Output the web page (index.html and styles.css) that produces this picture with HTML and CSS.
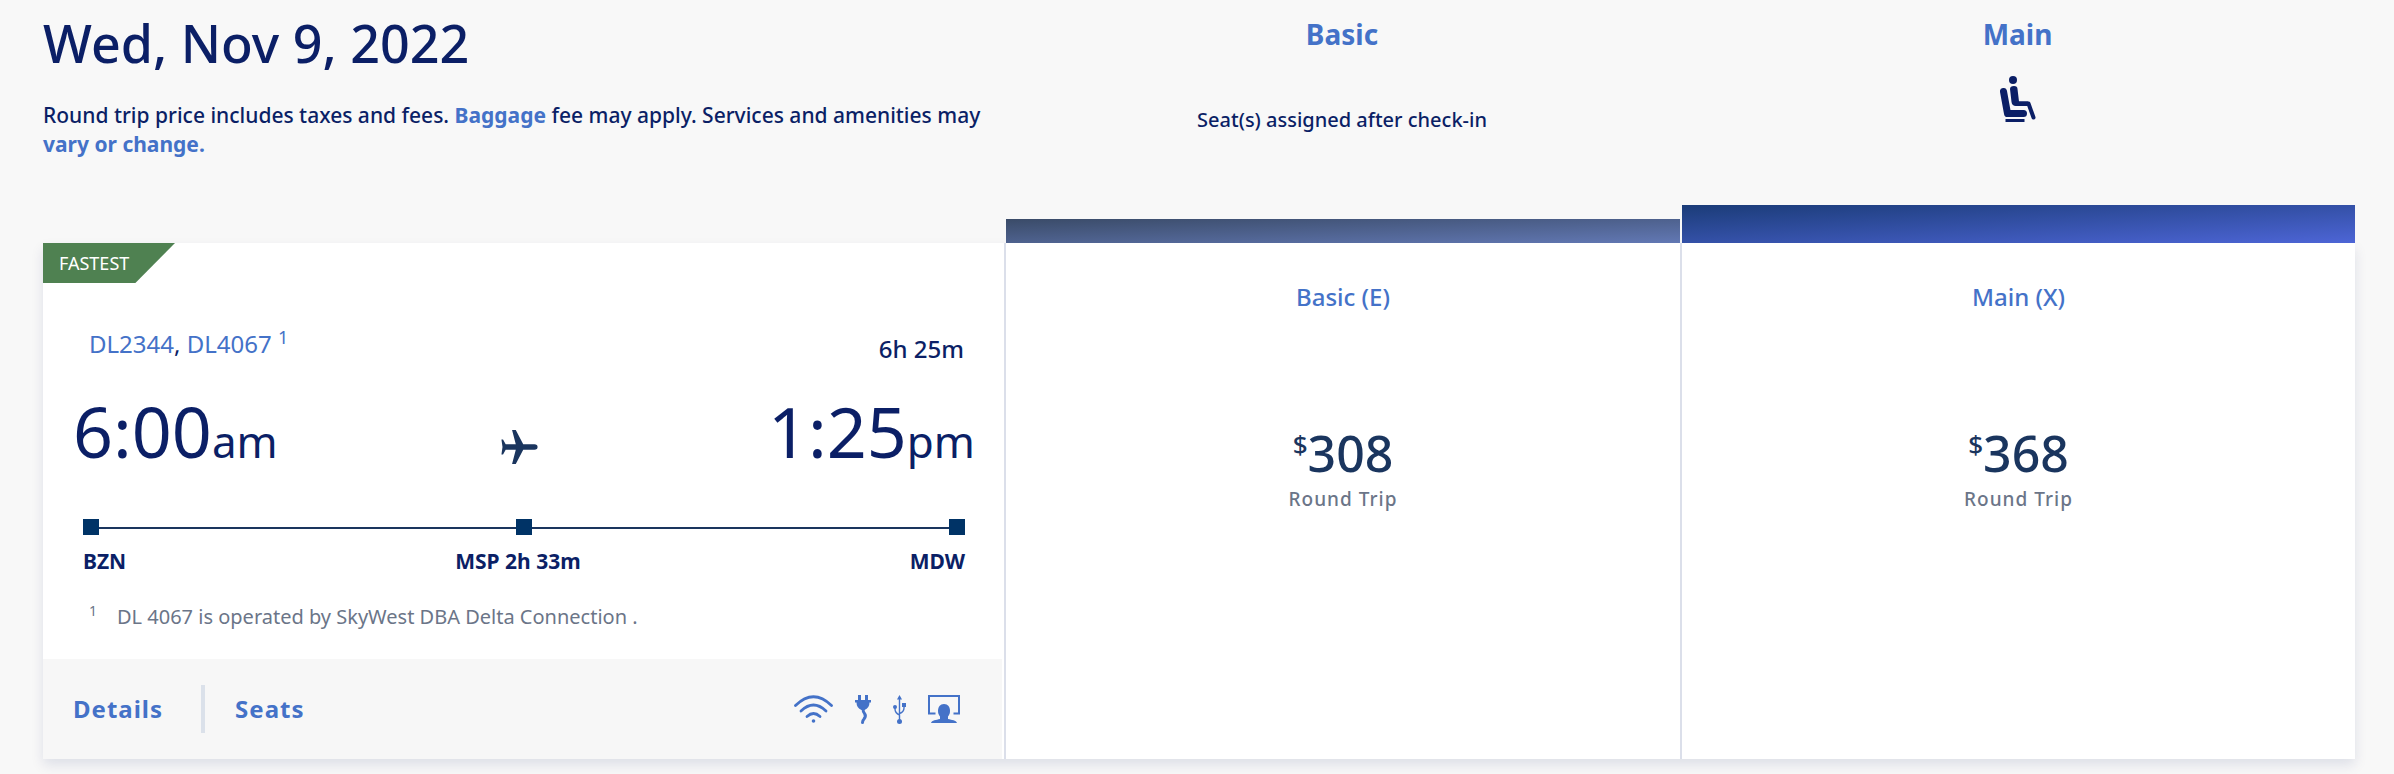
FILE: index.html
```html
<!DOCTYPE html>
<html lang="en">
<head>
  <meta charset="UTF-8">
  <meta name="viewport" content="width=device-width, initial-scale=1.0">
  <title>Flight results</title>
  <link rel="stylesheet" href="styles.css">
</head>
<body>
  <main class="results">
    <header class="results-header">
      <div class="trip-info">
        <h1 class="trip-date">Wed, Nov 9, 2022</h1>
        <p class="trip-note">Round trip price includes taxes and fees. <a href="#baggage">Baggage</a> fee may apply. Services and amenities may <a href="#amenities">vary or change.</a></p>
      </div>
      <div class="cabin">
        <h2 class="cabin-name">Basic</h2>
        <p class="cabin-text">Seat(s) assigned after check-in</p>
      </div>
      <div class="cabin">
        <h2 class="cabin-name">Main</h2>
        <svg class="seat-icon" viewBox="0 0 36 46" role="img" aria-label="Seat selection">
          <circle cx="13" cy="4" r="4"/>
          <path d="M3.500 15.500 L7.500 37.500 H23.500" class="seat-line"/>
          <path d="M14 13.500 L16 27.500 H28.500 L33.500 41.500" class="leg-line"/>
          <path d="M10 13 Q10 10 14 10 Q17.500 10 17.500 13 L19 25.500 H28 L30 30 H16 Q12 30 11.500 26 Z"/>
          <rect x="5.500" y="43" width="19" height="3"/>
        </svg>
      </div>
    </header>

    <div class="cabin-bars">
      <div class="bar-gap"></div>
      <div class="bar bar-basic"></div>
      <div class="bar bar-main"></div>
    </div>

    <section class="flight-card">
      <div class="flight">
        <div class="flight-body">
          <span class="badge">FASTEST</span>
          <div class="flight-row">
            <div class="flight-numbers"><a href="#dl2344">DL2344</a>, <a href="#dl4067">DL4067 <sup>1</sup></a></div>
            <div class="duration">6h 25m</div>
          </div>
          <div class="time-row">
            <div class="time">6:00<small>am</small></div>
            <svg class="plane-icon" viewBox="0 0 34 32" aria-hidden="true">
              <path d="M0 9 H1.500 L4 13.500 H13.500 L10 0 H13.500 L20.500 13.500 H31 Q34 13.500 34 16 Q34 18.500 31 18.500 H20.500 L13.500 32 H10 L13.500 18.500 H4 L1.500 23 H0 L1 16 Z"/>
            </svg>
            <div class="time">1:25<small>pm</small></div>
          </div>
          <div class="route-line"><i></i><i></i><i></i></div>
          <div class="route-labels">
            <span>BZN</span>
            <span>MSP 2h 33m</span>
            <span>MDW</span>
          </div>
          <p class="operated"><sup>1</sup><span>DL 4067 is operated by SkyWest DBA Delta Connection .</span></p>
        </div>
        <footer class="flight-footer">
          <a class="footer-link" href="#details">Details</a>
          <a class="footer-link" href="#seats">Seats</a>
          <div class="amenities">
            <svg width="39" height="28" viewBox="0 0 39 28" role="img" aria-label="Wi-Fi">
              <g class="stroke">
                <path d="M1.500 10.500 Q19.500 -7 37.500 10.500" stroke-width="2.800"/>
                <path d="M7 16 Q19.500 4 32 16" stroke-width="2.800"/>
                <path d="M13 21.500 Q19.500 15.500 26 21.500" stroke-width="2.800"/>
              </g>
              <circle cx="19.500" cy="26" r="1.800"/>
            </svg>
            <svg width="16" height="29" viewBox="0 0 16 29" role="img" aria-label="Power outlet">
              <path d="M3 0 H6 V5 H10 V0 H13 V5 H16 V7.500 H14.500 Q14.500 13 9.500 15 H6.500 Q1.500 13 1.500 7.500 H0 V5 H3 Z"/>
              <path class="stroke" d="M8 13.500 Q8 17 9.500 18.500 Q11.500 21 9 24 Q7.500 25.500 7.500 27.500" stroke-width="3"/>
            </svg>
            <svg width="13" height="29" viewBox="0 0 13 29" role="img" aria-label="USB power">
              <path d="M6.500 0 L9 4.500 H4 Z"/>
              <circle cx="6.500" cy="26.500" r="2.500"/>
              <circle cx="2" cy="12" r="2"/>
              <rect x="9" y="8" width="4" height="4"/>
              <path class="stroke" d="M6.500 3 V25 M2 12 V14 Q2 18 6.500 20 M11 11 V13 Q11 17 6.500 18.500" stroke-width="1.400"/>
            </svg>
            <svg width="32" height="28" viewBox="0 0 32 28" role="img" aria-label="Seatback entertainment">
              <path class="stroke screen" d="M7.500 18.500 H1 V1 H31 V18.500 H25.500" stroke-width="2"/>
              <path d="M16 9 C20 9 22 12 22 16 C22 19 21 20 20 21.500 V24 C24 25 28 25 29 28 H3 C4 25 8 25 12 24 V21.500 C11 20 10 19 10 16 C10 12 12 9 16 9 Z"/>
            </svg>
          </div>
        </footer>
      </div>
      <a class="fare" href="#basic">
        <span class="fare-name">Basic (E)</span>
        <span class="fare-price"><sup>$</sup>308</span>
        <span class="fare-type">Round Trip</span>
      </a>
      <a class="fare" href="#main">
        <span class="fare-name">Main (X)</span>
        <span class="fare-price"><sup>$</sup>368</span>
        <span class="fare-type">Round Trip</span>
      </a>
    </section>
  </main>
</body>
</html>
```
FILE: styles.css
```css
* {
  box-sizing: border-box;
}

body {
  margin: 0;
  background-color: #f8f8f8;
  color: #0b1f66;
  font-family: "Noto Sans", "Open Sans", sans-serif;
}

a {
  color: #4472c8;
  text-decoration: none;
}

h1, h2, p {
  margin: 0;
}

.results {
  padding: 0 39px 15px 43px;
}

.results-header,
.cabin-bars,
.flight-card {
  display: grid;
  grid-template-columns: 961fr 676fr 675fr;
}

.results-header {
  height: 205px;
}

.trip-date {
  margin-top: 7px;
  font-size: 52px;
  line-height: 72px;
  font-weight: 500;
}

.trip-note {
  margin-top: 22px;
  font-size: 21px;
  line-height: 29px;
  font-weight: 500;
}

.trip-note a {
  font-weight: 700;
}

.cabin {
  display: flex;
  flex-direction: column;
  align-items: center;
  padding-top: 16px;
}

.cabin-name {
  color: #4472c8;
  font-size: 28px;
  line-height: 36px;
  font-weight: 700;
}

.cabin-text {
  margin-top: 54px;
  font-size: 20px;
  line-height: 28px;
  font-weight: 500;
}

.seat-icon {
  width: 36px;
  height: 46px;
  margin-top: 24px;
  fill: #0b1f66;
}

.seat-line,
.leg-line {
  fill: none;
  stroke: #0b1f66;
  stroke-linecap: round;
  stroke-linejoin: round;
}

.seat-line {
  stroke-width: 7;
}

.leg-line {
  stroke-width: 4;
}

.cabin-bars {
  align-items: end;
}

.bar {
  margin-left: 2px;
}

.bar-basic {
  height: 24px;
  background: linear-gradient(to bottom right, #3a4b68, #6278b4);
}

.bar-main {
  height: 38px;
  background: linear-gradient(to bottom right, #1b3c78, #4d65d6);
}

.flight-card {
  background-color: #fff;
  box-shadow: 0 6px 12px rgba(11, 31, 102, 0.11);
}

.flight {
  display: flex;
  flex-direction: column;
  padding-right: 2px;
}

.flight-body {
  padding: 0 27px 28px 30px;
}

.badge {
  display: block;
  width: 132px;
  margin-left: -30px;
  padding-left: 16px;
  background-color: #4f8151;
  clip-path: polygon(0 0, 100% 0, 70% 100%, 0 100%);
  color: #fff;
  font-size: 18px;
  line-height: 40px;
}

.flight-row {
  display: flex;
  justify-content: space-between;
  align-items: flex-end;
  height: 82px;
  padding: 0 11px 0 16px;
  font-size: 24px;
  line-height: 32px;
}

.flight-numbers {
  padding-bottom: 5px;
}

.flight-numbers sup {
  font-size: 18px;
  line-height: 0;
}

.duration {
  font-weight: 500;
}

.time-row {
  display: grid;
  grid-template-columns: 1fr auto 1fr;
  align-items: center;
  height: 96px;
  margin-top: 18px;
}

.time {
  font-size: 70px;
  line-height: 96px;
}

.time:last-child {
  text-align: right;
}

.time small {
  font-size: 44px;
}

.plane-icon {
  width: 37px;
  height: 34px;
  margin: 22px 10px 0 0;
  fill: #1a355e;
}

.route-line {
  display: flex;
  justify-content: space-between;
  margin: 40px 10px 0;
  background: linear-gradient(#1a355e, #1a355e) 0 8px / 100% 2px no-repeat;
}

.route-line i {
  width: 16px;
  height: 16px;
  background-color: #036;
}

.route-labels {
  display: flex;
  justify-content: space-between;
  margin: 11px 10px 0;
  font-size: 21px;
  line-height: 30px;
  font-weight: 700;
}

.operated {
  display: flex;
  gap: 20px;
  margin: 27px 16px 0;
  color: #6b7588;
  font-size: 20px;
  line-height: 28px;
}

.operated sup {
  font-size: 14px;
  line-height: 16px;
}

.flight-footer {
  display: flex;
  align-items: center;
  height: 100px;
  margin-top: auto;
  padding: 0 42px 0 30px;
  background-color: #f7f7f7;
}

.footer-link {
  font-size: 24px;
  line-height: 48px;
  font-weight: 700;
  letter-spacing: 1px;
}

.footer-link + .footer-link {
  margin-left: 38px;
  padding-left: 30px;
  border-left: 4px solid #dbe1ea;
}

.amenities {
  display: flex;
  align-items: center;
  gap: 22px;
  margin-left: auto;
  fill: #4472c8;
}

.amenities .stroke {
  fill: none;
  stroke: #4472c8;
  stroke-linecap: round;
}

.amenities .screen {
  stroke-linecap: butt;
}

.fare {
  display: flex;
  flex-direction: column;
  align-items: center;
  padding-top: 38px;
  border-left: 2px solid #dbdfea;
}

.fare-name {
  font-size: 24px;
  line-height: 32px;
  font-weight: 500;
}

.fare-price {
  margin-top: 108px;
  color: #1a355e;
  font-size: 50px;
  line-height: 64px;
  font-weight: 500;
}

.fare-price sup {
  font-size: 26px;
  line-height: 0;
}

.fare-type {
  color: #6b7588;
  font-size: 19px;
  line-height: 28px;
  font-weight: 500;
  letter-spacing: 1px;
}
```
